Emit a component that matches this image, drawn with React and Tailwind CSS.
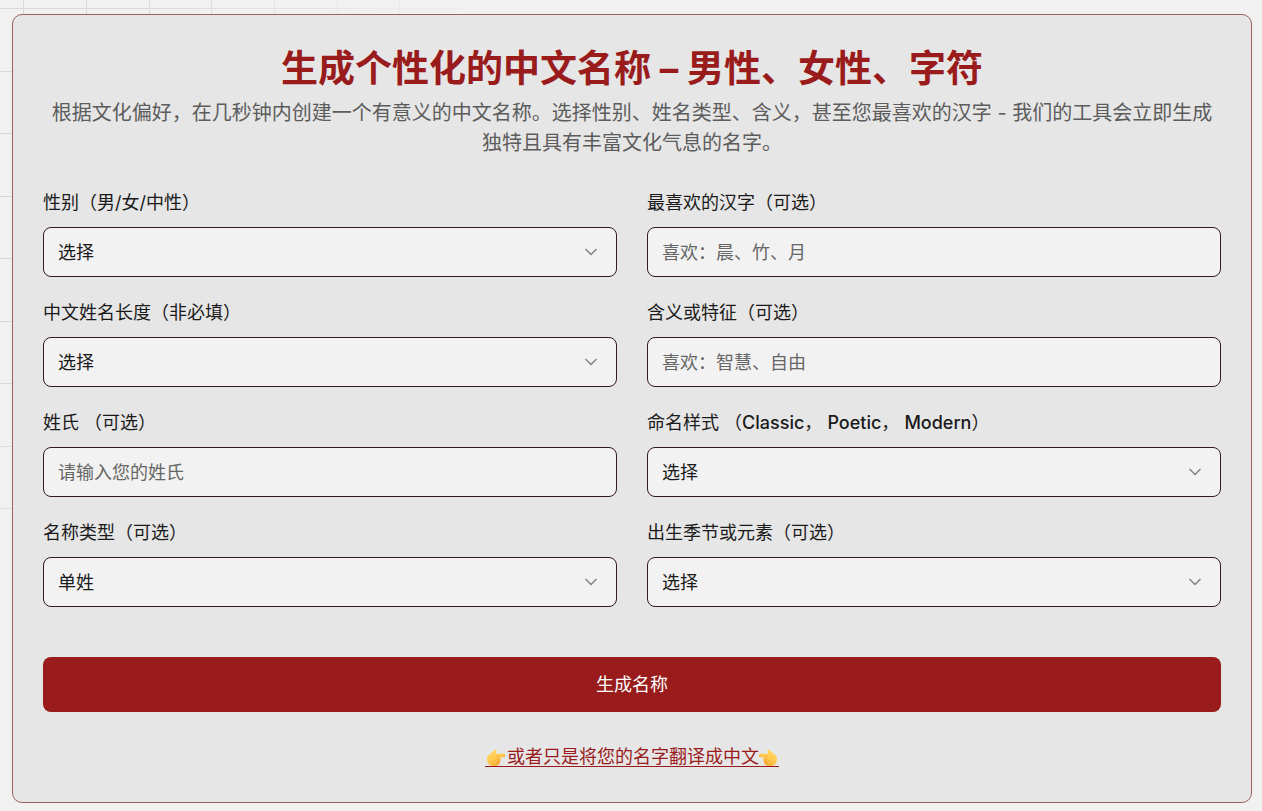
import { useState } from "react";
import { ChevronDown } from "lucide-react";

const FIELDS = [
  { id: "gender", label: "性别（男/女/中性）", options: ["选择", "男", "女", "中性"] },
  { id: "character", label: "最喜欢的汉字（可选）", placeholder: "喜欢：晨、竹、月" },
  { id: "length", label: "中文姓名长度（非必填）", options: ["选择", "两个字", "三个字"] },
  { id: "meaning", label: "含义或特征（可选）", placeholder: "喜欢：智慧、自由" },
  { id: "surname", label: "姓氏 （可选）", placeholder: "请输入您的姓氏" },
  {
    id: "style",
    label: (
      <>
        命名样式 （<span className="font-medium">Classic</span>， <span className="font-medium">Poetic</span>，{" "}
        <span className="font-medium">Modern</span>）
      </>
    ),
    options: ["选择", "Classic", "Poetic", "Modern"],
  },
  { id: "type", label: "名称类型（可选）", options: ["单姓", "复姓"] },
  { id: "season", label: "出生季节或元素（可选）", options: ["选择", "春", "夏", "秋", "冬"] },
];

const GRID_X = [23, 86, 149, 211, 274, 337, 399];
const GRID_Y = [8, 71, 133, 196, 258, 321, 383, 446, 508];

export default function App() {
  const [values, setValues] = useState({});

  const handleChange = (id, value) => {
    setValues((prev) => ({ ...prev, [id]: value }));
  };

  return (
    <main className="relative isolate min-h-screen bg-[#f1f1f1] pt-[14px] pr-[10px] pb-2 pl-3 font-[Inter,'Noto_Sans_CJK_SC',sans-serif] text-[#1a1a1a]">
      <GridBackdrop />
      <section className="rounded-[10px] border border-[#9d6063] bg-[#e6e6e6] p-[30px]">
        <header className="text-center">
          <h1 className="mb-[5px] text-[37px] leading-[48px] font-bold text-[#991b1b]">
            生成个性化的中文名称 – 男性、女性、字符
          </h1>
          <p className="text-[20px] leading-[30px] text-[#5c5c5c]">
            根据文化偏好，在几秒钟内创建一个有意义的中文名称。选择性别、姓名类型、含义，甚至您最喜欢的汉字 - 我们的工具会立即生成独特且具有丰富文化气息的名字。
          </p>
        </header>

        <form onSubmit={(e) => e.preventDefault()} className="mt-[35px]">
          <div className="grid grid-cols-1 gap-x-[30px] gap-y-[26px] sm:grid-cols-2">
            {FIELDS.map((field) => (
              <Field
                key={field.id}
                field={field}
                value={values[field.id]}
                onChange={(value) => handleChange(field.id, value)}
              />
            ))}
          </div>
          <button
            type="submit"
            className="mt-[50px] h-[55px] w-full cursor-pointer rounded-lg bg-[#991b1b] text-[18px] text-white hover:bg-red-900"
          >
            生成名称
          </button>
        </form>

        <div className="mt-[30px] flex h-[30px] items-center justify-center">
          <a
            href="#translate"
            className="flex h-5 items-center border-b border-[#991b1b] text-[18px] text-[#991b1b]"
          >
            <PointingHand className="mr-[2px] h-5 w-5" />
            或者只是将您的名字翻译成中文
            <PointingHand className="h-5 w-5 -scale-x-100" />
          </a>
        </div>
      </section>
    </main>
  );
}

function Field({ field, value, onChange }) {
  return (
    <div className="flex min-w-0 flex-col gap-[14px]">
      <label htmlFor={field.id} className="text-[18px] leading-5 whitespace-nowrap">
        {field.label}
      </label>
      {field.options ? (
        <div className="relative">
          <select
            id={field.id}
            value={value ?? field.options[0]}
            onChange={(e) => onChange(e.target.value)}
            className="h-[50px] w-full appearance-none rounded-lg border border-[#35191f] bg-[#f2f2f2] px-[14px] text-[18px] outline-none"
          >
            {field.options.map((option) => (
              <option key={option}>{option}</option>
            ))}
          </select>
          <ChevronDown
            size={20}
            strokeWidth={2}
            className="pointer-events-none absolute top-[15px] right-4 text-[#888888]"
          />
        </div>
      ) : (
        <input
          id={field.id}
          type="text"
          value={value ?? ""}
          onChange={(e) => onChange(e.target.value)}
          placeholder={field.placeholder}
          className="h-[50px] w-full rounded-lg border border-[#35191f] bg-[#f2f2f2] px-[14px] text-[18px] outline-none placeholder:text-[#666666]"
        />
      )}
    </div>
  );
}

/* Faint grid that fades out from the top left corner */
function GridBackdrop() {
  return (
    <svg aria-hidden="true" width="520" height="560" className="absolute top-0 left-0 -z-10">
      <defs>
        <radialGradient id="fade" gradientUnits="userSpaceOnUse" cx="0" cy="200" r="460">
          <stop offset="0" stopColor="#fff" />
          <stop offset="0.5" stopColor="#fff" stopOpacity="0.9" />
          <stop offset="1" stopColor="#fff" stopOpacity="0.2" />
        </radialGradient>
        <mask id="grid-mask">
          <rect width="520" height="560" fill="url(#fade)" />
        </mask>
      </defs>
      <g fill="#d7d7d7" mask="url(#grid-mask)">
        {GRID_X.map((x) => (
          <rect key={x} x={x} y="0" width="1" height="509" />
        ))}
        {GRID_Y.map((y) => (
          <rect key={y} x="0" y={y} width="462" height="1" />
        ))}
      </g>
    </svg>
  );
}

function PointingHand({ className }) {
  return (
    <svg viewBox="0 0 20 20" aria-hidden="true" className={className}>
      <defs>
        <linearGradient id="skin" x1="0" y1="0" x2="0.7" y2="1">
          <stop offset="0" stopColor="#ffe06e" />
          <stop offset="0.6" stopColor="#ffc64a" />
          <stop offset="1" stopColor="#f5a030" />
        </linearGradient>
      </defs>
      <path
        d="M2 12C2 9.4 3.6 7.8 5.8 6.4L9.2 3.2C10.2 2.3 11.8 3 11.5 4.4L10.8 6.8H18.6a1.7 1.7 0 0 1 0 3.4H14.8C15.8 10.8 16 12.2 15.1 12.9C15.8 13.7 15.6 14.9 14.7 15.4C15 16.6 14.3 17.7 13.2 18C12.2 18.8 10.4 19 8.6 19C4.6 19 2 16.4 2 12Z"
        fill="url(#skin)"
      />
      <path
        d="M14.8 10.2H11.4M15.1 12.9H11.8M14.7 15.4H11.6"
        fill="none"
        stroke="#ee9a2e"
        strokeWidth="0.5"
        strokeLinecap="round"
      />
    </svg>
  );
}
